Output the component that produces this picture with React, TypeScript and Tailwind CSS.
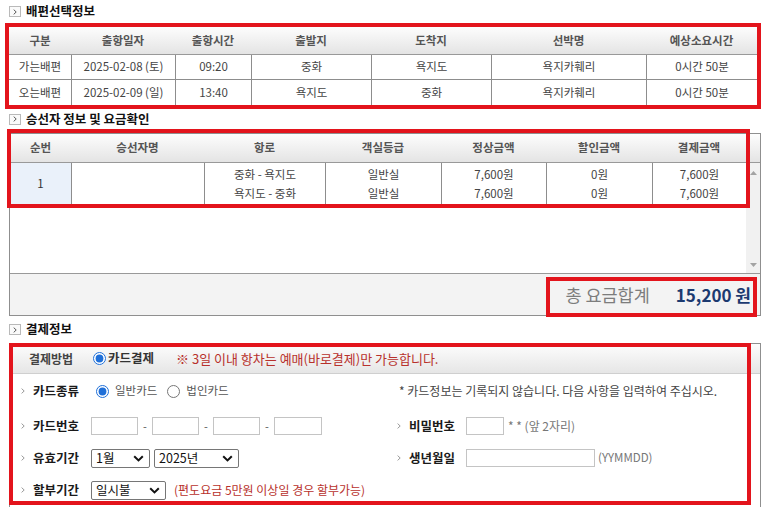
import React from 'react';

const scheduleHead = ['구분', '출항일자', '출항시간', '출발지', '도착지', '선박명', '예상소요시간'];
const scheduleRows = [
  ['가는배편', '2025-02-08 (토)', '09:20', '중화', '욕지도', '욕지카훼리', '0시간 50분'],
  ['오는배편', '2025-02-09 (일)', '13:40', '욕지도', '중화', '욕지카훼리', '0시간 50분'],
];
const fareHead = ['순번', '승선자명', '항로', '객실등급', '정상금액', '할인금액', '결제금액'];

function SectionTitle({ className, children }: { className: string; children: React.ReactNode }) {
  return (
    <div className={`flex items-center pl-[9px] ${className}`}>
      <span className="mr-[5px] flex h-[11px] w-[12px] items-center justify-center border border-[#b9b9b9] bg-[#fafafa]">
        <svg width="4" height="6" viewBox="0 0 4 6">
          <path d="M0.7 0.6 L3.2 3 L0.7 5.4" fill="none" stroke="#555" strokeWidth="1" />
        </svg>
      </span>
      <span className="text-[12.5px] font-bold leading-none text-[#111]">{children}</span>
    </div>
  );
}

function ScheduleTable() {
  return (
    <div className="ml-[5px] w-[756px] border-4 border-[#e3141c]">
      <div className="grid h-[28px] grid-cols-[62px_104px_76px_120px_120px_155px_111px] border-b border-[#999] bg-linear-to-b from-[#fdfdfd] to-[#e4e4e4]">
        {scheduleHead.map((h) => (
          <div key={h} className="flex items-center justify-center text-[11.5px] font-bold text-[#555]">
            {h}
          </div>
        ))}
      </div>
      {scheduleRows.map((row, i) => (
        <div
          key={i}
          className={`grid h-[25px] grid-cols-[62px_104px_76px_120px_120px_155px_111px] ${i === 0 ? 'border-b border-[#8d8d8d]' : ''}`}
        >
          {row.map((c, j) => (
            <div
              key={j}
              className={`flex items-center justify-center text-[11.5px] text-[#444] ${j > 0 ? 'border-l border-[#8d8d8d]' : ''}`}
            >
              {c}
            </div>
          ))}
        </div>
      ))}
    </div>
  );
}

function Lines({ a, b }: { a: string; b: string }) {
  return (
    <div className="flex flex-col items-center justify-center border-l border-[#8d8d8d] text-[11.5px] leading-[19px] text-[#444]">
      <span>{a}</span>
      <span>{b}</span>
    </div>
  );
}

function FareBox() {
  return (
    <div className="relative ml-[9px] w-[752px] border border-[#8f8f8f]">
      <div className="flex h-[29px] border-b border-[#999] bg-linear-to-b from-[#fdfdfd] to-[#e4e4e4]">
        <div className="grid w-[736px] grid-cols-[61px_133px_121px_116px_105px_106px_94px]">
          {fareHead.map((h) => (
            <div key={h} className="flex items-center justify-center text-[11.5px] font-bold text-[#555]">
              {h}
            </div>
          ))}
        </div>
      </div>
      <div className="flex h-[110px]">
        <div className="w-[736px]">
          <div className="grid h-[42px] grid-cols-[61px_133px_121px_116px_105px_106px_94px] border-b border-[#8d8d8d]">
            <div className="flex items-center justify-center bg-[#eaf1fa] text-[11.5px] text-[#333]">1</div>
            <div className="border-l border-[#8d8d8d]" />
            <Lines a="중화 - 욕지도" b="욕지도 - 중화" />
            <Lines a="일반실" b="일반실" />
            <Lines a="7,600원" b="7,600원" />
            <Lines a="0원" b="0원" />
            <Lines a="7,600원" b="7,600원" />
          </div>
        </div>
        <div className="flex w-[14px] flex-col items-center justify-between bg-[#f1f1f1] pt-[8px] pb-[6px]">
          <svg width="7" height="4" viewBox="0 0 7 4">
            <path d="M0 4 L3.5 0 L7 4 Z" fill="#a3a3a3" />
          </svg>
          <svg width="7" height="4" viewBox="0 0 7 4">
            <path d="M0 0 L3.5 4 L7 0 Z" fill="#a3a3a3" />
          </svg>
        </div>
      </div>
      <div className="flex h-[42px] items-center justify-end border-t border-[#999] bg-[#f3f3f3] pr-[9px]">
        <span className="text-[17.5px] leading-none text-[#7d7d7d]">총 요금합계</span>
        <span className="ml-[26px] text-[17px] font-bold leading-none text-[#1c3a70]">15,200 원</span>
      </div>
      <div className="pointer-events-none absolute -left-[3px] -top-[5px] h-[79px] w-[743px] border-4 border-[#e3141c]" />
      <div className="pointer-events-none absolute left-[536px] top-[143px] h-[40px] w-[211px] border-4 border-[#e3141c]" />
    </div>
  );
}

function Chevron() {
  return (
    <span className="flex w-[12px] items-center">
      <svg width="4" height="6" viewBox="0 0 4 6">
        <path d="M0.6 0.6 L3.2 3 L0.6 5.4" fill="none" stroke="#9a9a9a" strokeWidth="1" />
      </svg>
    </span>
  );
}

function Label({ w, children }: { w: string; children: React.ReactNode }) {
  return <span className={`${w} pt-[1px] text-[12.5px] font-bold text-[#1a1a1a]`}>{children}</span>;
}

function TextBox({ w }: { w: string }) {
  return <input type="text" className={`h-[18px] ${w} border border-[#c4c4c4] bg-white`} />;
}

// looks like a native dropdown; drawn by hand so the CJK text sits right
function Select({ w, value }: { w: string; value: string }) {
  return (
    <div
      role="combobox"
      aria-expanded={false}
      className={`flex h-[19px] ${w} items-center justify-between rounded-[2px] border border-[#767676] bg-white pl-[4px] pr-[5px]`}
    >
      <span className="text-[12.5px] leading-none text-[#111]">{value}</span>
      <svg width="11" height="7" viewBox="0 0 11 7">
        <path d="M1.2 1.2 L5.5 5.4 L9.8 1.2" fill="none" stroke="#111" strokeWidth="2" />
      </svg>
    </div>
  );
}

function Radio({ checked, name }: { checked?: boolean; name: string }) {
  return (
    <input
      type="radio"
      name={name}
      defaultChecked={checked}
      className="m-0 h-[13px] w-[13px] accent-[#1f6fd8]"
    />
  );
}

function PaymentBox() {
  return (
    <div className="relative ml-[9px] h-[164px] w-[752px] border-x border-t border-[#8f8f8f]">
      <div className="flex h-[30px] items-center border-b border-[#cfcfcf] bg-linear-to-b from-[#fdfdfd] to-[#e6e6e6] pl-[19px]">
        <span className="w-[64px] text-[12px] font-bold text-[#444]">결제방법</span>
        <Radio name="pay" checked />
        <span className="ml-[2px] text-[12.5px] font-bold text-[#333]">카드결제</span>
        <span className="ml-[22px] text-[13px] text-[#b8312c]">※ 3일 이내 항차는 예매(바로결제)만 가능합니다.</span>
      </div>
      <div className="pt-[1px]">
        <div className="flex h-[32px] items-center">
          <div className="flex w-[376px] items-center pl-[11px]">
            <Chevron />
            <Label w="w-[58px]">카드종류</Label>
            <span className="ml-[5px] flex items-center">
              <Radio name="kind" checked />
            </span>
            <span className="ml-[6px] text-[11.5px] text-[#555]">일반카드</span>
            <span className="ml-[10px] flex items-center">
              <Radio name="kind" />
            </span>
            <span className="ml-[6px] text-[11.5px] text-[#555]">법인카드</span>
          </div>
          <div className="pl-[13px] text-[12px] text-[#444]">* 카드정보는 기록되지 않습니다. 다음 사항을 입력하여 주십시오.</div>
        </div>
        <div className="mt-[3px] flex h-[32px] items-center">
          <div className="flex w-[376px] items-center pl-[11px]">
            <Chevron />
            <Label w="w-[58px]">카드번호</Label>
            <TextBox w="w-[47px]" />
            <span className="w-[14px] text-center text-[11px] text-[#555]">-</span>
            <TextBox w="w-[47px]" />
            <span className="w-[14px] text-center text-[11px] text-[#555]">-</span>
            <TextBox w="w-[47px]" />
            <span className="w-[14px] text-center text-[11px] text-[#555]">-</span>
            <TextBox w="w-[48px]" />
          </div>
          <div className="flex items-center pl-[11px]">
            <Chevron />
            <Label w="w-[57px]">비밀번호</Label>
            <TextBox w="w-[38px]" />
            <span className="ml-[4px] text-[12px] text-[#777]">* * (앞 2자리)</span>
          </div>
        </div>
        <div className="flex h-[32px] items-center">
          <div className="flex w-[376px] items-center pl-[11px]">
            <Chevron />
            <Label w="w-[58px]">유효기간</Label>
            <Select w="w-[59px]" value="1월" />
            <span className="ml-[4px]">
              <Select w="w-[85px]" value="2025년" />
            </span>
          </div>
          <div className="flex items-center pl-[11px]">
            <Chevron />
            <Label w="w-[57px]">생년월일</Label>
            <TextBox w="w-[129px]" />
            <span className="ml-[3px] text-[11.5px] text-[#777]">(YYMMDD)</span>
          </div>
        </div>
        <div className="flex h-[32px] items-center">
          <div className="flex items-center pl-[11px]">
            <Chevron />
            <Label w="w-[58px]">할부기간</Label>
            <Select w="w-[75px]" value="일시불" />
            <span className="ml-[8px] text-[12px] text-[#b8312c]">(편도요금 5만원 이상일 경우 할부가능)</span>
          </div>
        </div>
      </div>
      <div className="pointer-events-none absolute -left-[1px] -top-[1px] h-[162px] w-[742px] border-4 border-[#e3141c]" />
    </div>
  );
}

export default function App() {
  return (
    <div className="h-[507px] w-[767px] overflow-hidden bg-white font-['Noto_Sans_CJK_KR','Noto_Sans',sans-serif] text-[#444]">
      <SectionTitle className="h-[23px]">배편선택정보</SectionTitle>
      <ScheduleTable />
      <SectionTitle className="h-[24px] pb-[4px]">승선자 정보 및 요금확인</SectionTitle>
      <FareBox />
      <SectionTitle className="h-[27px]">결제정보</SectionTitle>
      <PaymentBox />
    </div>
  );
}
